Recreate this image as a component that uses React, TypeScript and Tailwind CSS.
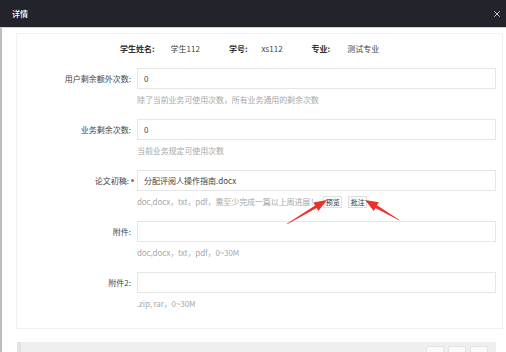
import React from "react";
import { X } from "lucide-react";

const font = { fontFamily: '"Noto Sans CJK SC", "Noto Sans", sans-serif' };

type Row = {
  label: string;
  value?: string;
  hint: string;
  required?: boolean;
  actions?: string[];
};

const rows: Row[] = [
  { label: "用户剩余额外次数:", value: "0", hint: "除了当前业务可使用次数，所有业务通用的剩余次数" },
  { label: "业务剩余次数:", value: "0", hint: "当前业务规定可使用次数" },
  {
    label: "论文初稿:",
    value: "分配评阅人操作指南.docx",
    hint: "doc,docx，txt，pdf，需至少完成一篇以上周进展！",
    required: true,
    actions: ["预览", "批注"],
  },
  { label: "附件:", hint: "doc,docx，txt，pdf，0~30M" },
  { label: "附件2:", hint: ".zip, rar，0~30M" },
];

function FormRow({ row }: { row: Row }) {
  return (
    <div className="flex mb-[13px]">
      <div className="w-[114px] h-[21px] flex items-center justify-end text-[8px] text-[#444] leading-[12px]">
        <span>{row.label}</span>
        {row.required && <span className="ml-[2px] mr-[-3px] w-[3px] h-[3px] rounded-full bg-[#e5502a]" />}
      </div>
      <div className="ml-[6px] flex-1 mr-[6px]">
        <div className="h-[21px] border border-[#e6e6e6] bg-white flex items-center pl-[6px] text-[8px] text-[#444]">
          {row.value}
        </div>
        <div className="mt-[5px] h-[12px] flex items-center text-[8px] text-[#a8a8a8] leading-[12px] tracking-[-0.1px]">
          <span>{row.hint}</span>
          {row.actions?.map((a, i) => (
            <span
              key={a}
              className={`h-[12px] w-[19px] flex items-center justify-center border border-[#e0e0e0] bg-[#fafafa] text-[7px] text-[#333] ${i === 0 ? "ml-[5px]" : "ml-[6px]"}`}
            >
              {a}
            </span>
          ))}
        </div>
      </div>
    </div>
  );
}

export default function App() {
  return (
    <div className="relative w-[506px] h-[352px] overflow-hidden bg-white flex flex-col" style={font}>
      {/* title bar */}
      <div className="h-[28px] shrink-0 bg-[#23242b] border-b border-[#cfd0d4] flex items-center justify-between pl-[12px] pr-[4px]">
        <span className="text-[8px] text-white font-medium">详情</span>
        <X className="w-[10px] h-[10px] text-[#e6e6e6]" strokeWidth={2} />
      </div>

      <div className="flex-1 border-l-2 border-[#bdbdbd] pl-[14px] pr-[3px] pt-[5px] flex flex-col">
        {/* card */}
        <div className="border border-[#f1f1f1] pt-[9px] pb-[5px]">
          <div className="flex items-center h-[12px] pl-[103px] text-[8px] leading-[12px] mb-[13px]">
            <span className="font-bold text-[#333]">学生姓名:</span>
            <span className="ml-[16px] text-[#444]">学生112</span>
            <span className="ml-[29px] font-bold text-[#333]">学号:</span>
            <span className="ml-[14px] text-[#444]">xs112</span>
            <span className="ml-[29px] font-bold text-[#333]">专业:</span>
            <span className="ml-[17px] text-[#444]">测试专业</span>
          </div>
          {rows.map((r) => (
            <FormRow key={r.label} row={r} />
          ))}
        </div>

        {/* footer */}
        <div className="mt-[13px] ml-[1px] mr-[7px] flex-1 bg-[#efefef] border-l-4 border-[#e2e2e2] flex items-start justify-end gap-[4px] pt-[4px] pr-[8px]">
          <div className="w-[18px] h-[10px] rounded-[2px] bg-[#fafafa] border border-[#e4e4e4]" />
          <div className="w-[18px] h-[10px] rounded-[2px] bg-[#fafafa] border border-[#e4e4e4]" />
          <div className="w-[18px] h-[10px] rounded-[2px] bg-[#fafafa] border border-[#e4e4e4]" />
        </div>
      </div>

      {/* red annotation arrows */}
      <svg className="absolute inset-0 pointer-events-none" width="506" height="352" viewBox="0 0 506 352">
        <polygon
          fill="#e8322b"
          points="287.15,224.26 316.62,207.99 318.42,210.99 327,200 313.28,202.41 315.08,205.41 286.85,223.74"
        />
        <polygon
          fill="#e8322b"
          points="399.15,219.74 376.96,205.31 378.74,202.29 365,200 373.66,210.91 375.44,207.89 398.85,220.26"
        />
      </svg>
    </div>
  );
}
